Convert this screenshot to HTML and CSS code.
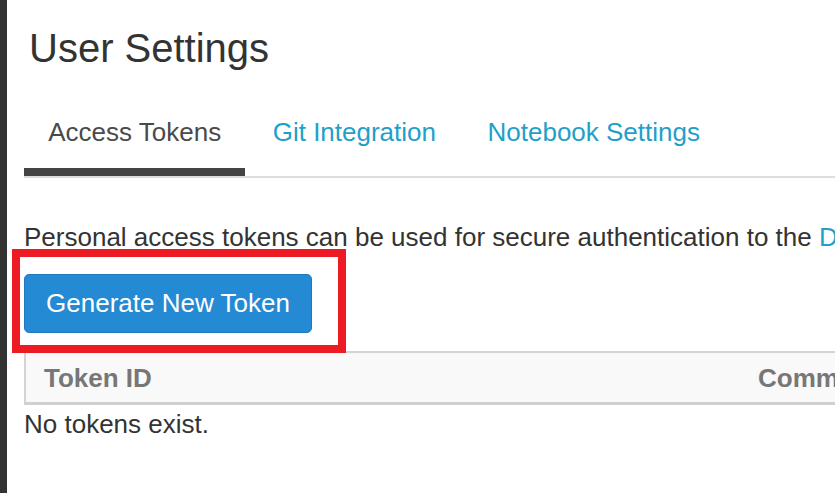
FILE: index.html
```html
<!DOCTYPE html>
<html>
<head>
<meta charset="utf-8">
<link rel="stylesheet" href="styles.css">
</head>
<body>
<div class="page">
  <div class="sidebar"></div>
  <main class="main">
    <h1 class="title">User Settings</h1>
    <nav class="tabs">
      <a class="tab active">Access Tokens</a>
      <a class="tab">Git Integration</a>
      <a class="tab">Notebook Settings</a>
    </nav>
    <p class="intro">Personal access tokens can be used for secure authentication to the <a class="link">Databricks API</a></p>
    <div class="btn-wrap">
      <button class="btn">Generate New Token</button>
      <div class="highlight"></div>
    </div>
    <table class="tokens">
      <thead>
        <tr><th class="col-id">Token ID</th><th>Comment</th></tr>
      </thead>
    </table>
    <p class="empty">No tokens exist.</p>
  </main>
</div>
</body>
</html>
```
FILE: styles.css
```css
html, body {
  margin: 0;
  padding: 0;
  background: #fff;
  overflow: hidden;
}
body {
  font-family: "Liberation Sans", Arial, sans-serif;
  color: #333;
}
.page {
  display: flex;
  width: 835px;
  height: 493px;
  overflow: hidden;
}
.sidebar {
  width: 7px;
  flex: none;
  background: #333;
}
.main {
  flex: 1;
  padding-left: 17px;
  min-width: 0;
}
.title {
  margin: 25px 0 0 5px;
  font-size: 40px;
  line-height: 46px;
  font-weight: normal;
  color: #333;
}
.tabs {
  display: flex;
  gap: 3px;
  margin-top: 46px;
  border-bottom: 2px solid #ddd;
  width: 1000px;
}
.tab {
  display: block;
  padding: 0 24.25px 21px;
  font-size: 26px;
  line-height: 30px;
  color: #1fa0c9;
  border-bottom: 8px solid transparent;
}
.tab.active {
  color: #4a4a4a;
  border-bottom-color: #444;
}
.intro {
  margin: 43.5px 0 0;
  font-size: 26px;
  line-height: 30px;
  white-space: nowrap;
  color: #333;
}
.link {
  color: #1fa0c9;
}
.btn-wrap {
  position: relative;
  margin-top: 22.5px;
}
.btn {
  display: block;
  font-family: "Liberation Sans", Arial, sans-serif;
  font-size: 26px;
  line-height: 35px;
  padding: 11px 0;
  color: #fff;
  background: #258ad4;
  border: 1px solid #1e79bd;
  border-radius: 5px;
  width: 288px;
  text-align: center;
  box-sizing: border-box;
}
.highlight {
  position: absolute;
  left: -12px;
  top: -25px;
  width: 334px;
  height: 104px;
  box-sizing: border-box;
  border: 8px solid #ed1c24;
  z-index: 2;
}
.tokens {
  margin-top: 18px;
  border-collapse: collapse;
  width: 1100px;
  background: #f9f9f9;
  border-top: 2px solid #d4d4d4;
  border-left: 2px solid #d4d4d4;
  border-bottom: 3px solid #d0d0d0;
}
.tokens th {
  text-align: left;
  font-size: 26px;
  line-height: 30px;
  font-weight: bold;
  color: #777;
  padding: 10px 18px 9px;
}
.tokens .col-id {
  width: 678px;
}
.empty {
  margin: 4px 0 0;
  font-size: 26px;
  line-height: 30px;
  color: #333;
}
```
